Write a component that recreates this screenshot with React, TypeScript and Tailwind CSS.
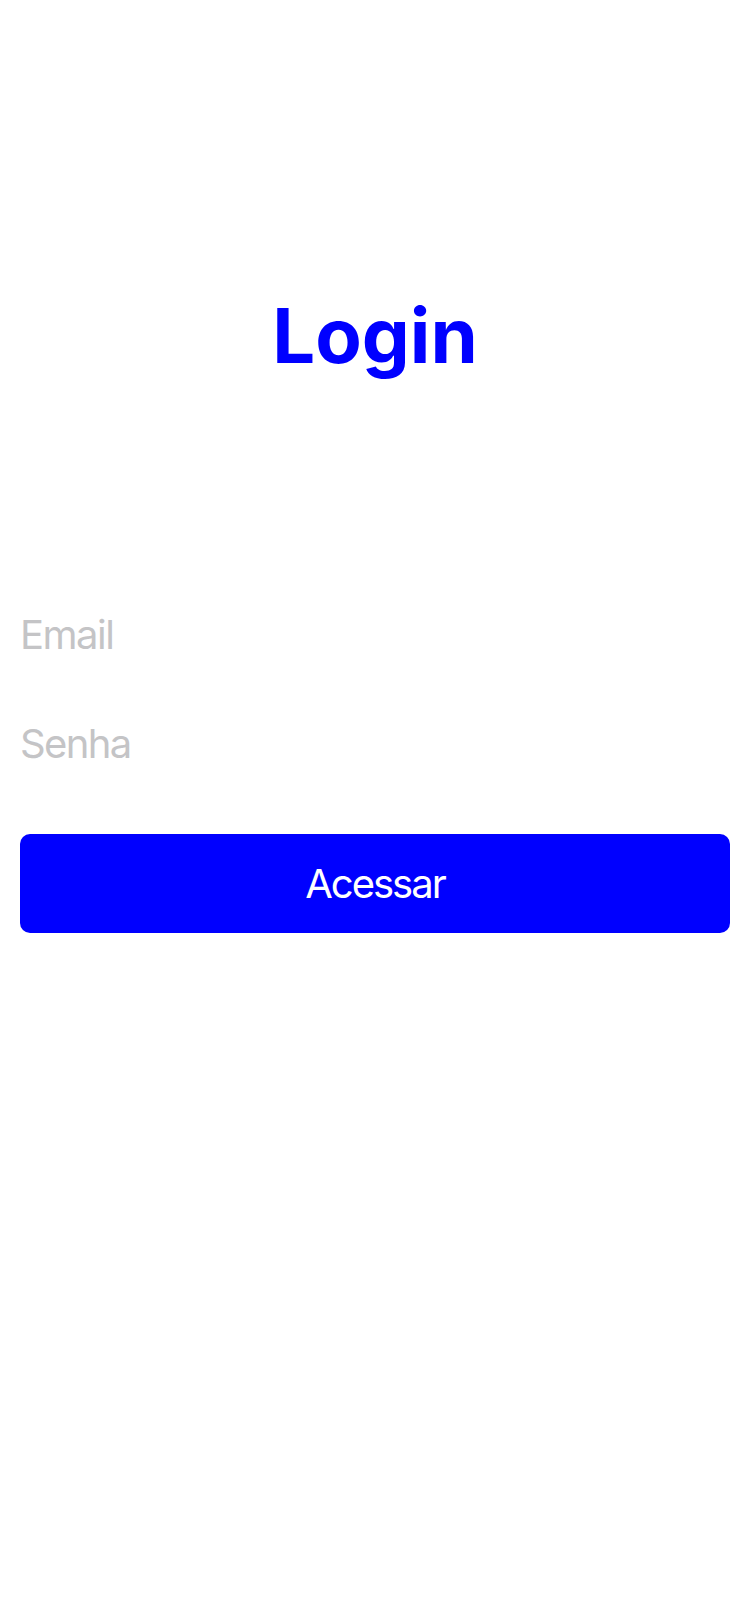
export default function App() {
  return (
    <div
      className="min-h-[1624px] w-[750px] bg-white px-[20px]"
      style={{ fontFamily: "Inter, 'Noto Sans', sans-serif" }}
    >
      {/* Title */}
      <div className="pt-[297px]">
        <h1 className="text-center text-[76px] font-bold leading-[76px] tracking-[0px] text-[#0000ff]">
          Login
        </h1>
      </div>

      {/* Form */}
      <form className="mt-[242px] flex flex-col" onSubmit={(e) => e.preventDefault()}>
        <input
          type="email"
          placeholder="Email"
          className="h-[40px] w-full bg-transparent p-0 text-[40px] font-normal tracking-[-1.5px] text-black outline-none placeholder:text-[#c4c4c6]"
        />
        <input
          type="password"
          placeholder="Senha"
          className="mt-[69px] h-[40px] w-full bg-transparent p-0 text-[40px] font-normal tracking-[-1.6px] text-black outline-none placeholder:text-[#c4c4c6]"
        />
        <button
          type="submit"
          className="mt-[70px] flex h-[99px] w-full items-center justify-center rounded-[10px] bg-[#0000ff] text-[40px] font-normal tracking-[-2px] text-white"
        >
          Acessar
        </button>
      </form>
    </div>
  );
}
